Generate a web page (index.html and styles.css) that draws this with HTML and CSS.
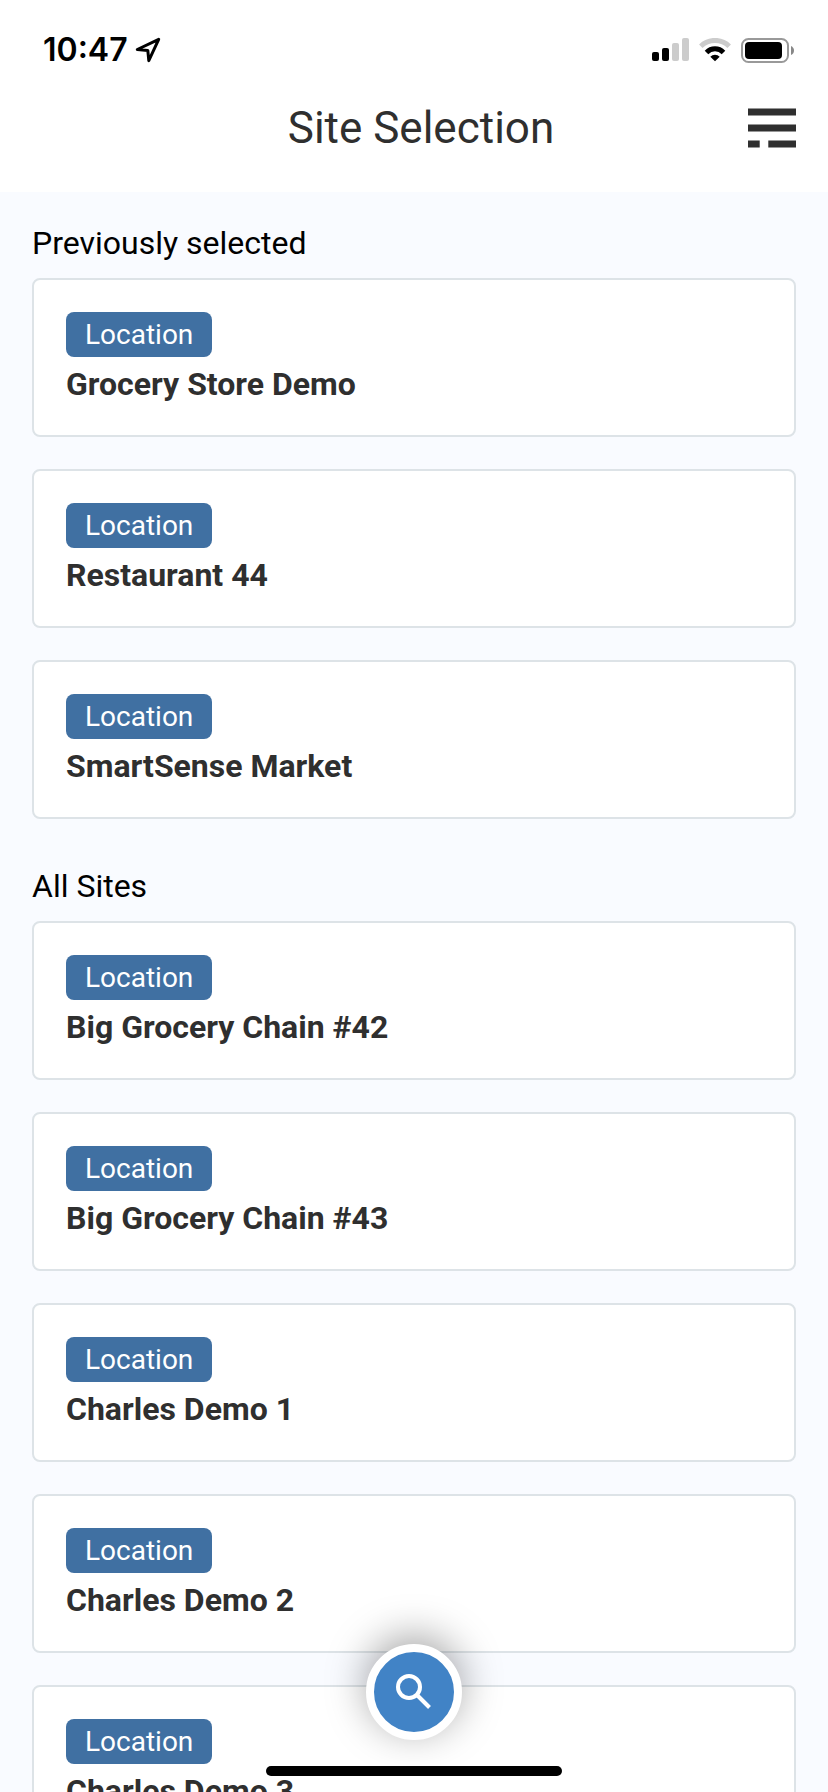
FILE: index.html
```html
<!DOCTYPE html>
<html lang="en">
<head>
<meta charset="utf-8">
<meta name="viewport" content="width=device-width, initial-scale=1">
<title>Site Selection</title>
<link rel="stylesheet" href="styles.css">
</head>
<body>
<div class="app">
  <div class="status">
    <div class="status-left">
      <time class="clock">10:47</time>
      <svg width="26" height="26" viewBox="0 0 26 26" fill="none" stroke="#000" stroke-width="3" stroke-linejoin="round" aria-hidden="true"><path d="M23.700 2.300 2.300 12.500 12.800 13.400 13.800 23.700Z"/></svg>
    </div>
    <div class="status-right">
      <svg width="37" height="24" viewBox="0 0 37 24" aria-hidden="true">
        <rect x="0" y="14" width="7" height="9" rx="2"/><rect x="10" y="10" width="7" height="13" rx="2"/>
        <g fill="#ccc"><rect x="20" y="5" width="7" height="18" rx="2"/><rect x="30" y="0" width="7" height="23" rx="2"/></g>
      </svg>
      <svg width="32" height="24" viewBox="0 0 32 24" fill="none" stroke-width="5" aria-hidden="true">
        <path stroke="#ccc" d="M1.8 8.2A20.3 20.3 0 0 1 30.2 8.2"/>
        <path stroke="#000" d="M7.5 14.4A12 12 0 0 1 24.5 14.4"/>
        <path fill="#000" d="M11.3 18.7A6.6 6.6 0 0 1 20.7 18.7L16 23.3Z"/>
      </svg>
      <svg width="53" height="25" viewBox="0 0 53 25" aria-hidden="true">
        <rect x="1" y="1" width="46" height="23" rx="6.5" fill="none" stroke="#999" stroke-width="2"/>
        <rect x="4" y="4" width="37" height="17" rx="4"/>
        <path fill="#888" d="M50 8Q53 9.500 53 12.500T50 17Z"/>
      </svg>
    </div>
  </div>
  <header class="header">
    <h1 class="title">Site Selection</h1>
    <button class="menu" aria-label="Menu">
      <svg width="48" height="40" viewBox="0 0 48 40" fill="#2f2f2f" aria-hidden="true"><path d="M0 .4H48V7.600H0ZM0 16.400H48V23.600H0ZM0 32.400H11.700V39.600H0ZM20.300 32.400H48V39.600H20.300Z"/></svg>
    </button>
  </header>
  <main class="content">
    <h2 class="label">Previously selected</h2>
    <ul class="sites">
      <li><button class="card"><span class="badge">Location</span><span class="name">Grocery Store Demo</span></button></li>
      <li><button class="card"><span class="badge">Location</span><span class="name">Restaurant 44</span></button></li>
      <li><button class="card"><span class="badge">Location</span><span class="name">SmartSense Market</span></button></li>
    </ul>
    <h2 class="label">All Sites</h2>
    <ul class="sites">
      <li><button class="card"><span class="badge">Location</span><span class="name">Big Grocery Chain #42</span></button></li>
      <li><button class="card"><span class="badge">Location</span><span class="name">Big Grocery Chain #43</span></button></li>
      <li><button class="card"><span class="badge">Location</span><span class="name">Charles Demo 1</span></button></li>
      <li><button class="card"><span class="badge">Location</span><span class="name">Charles Demo 2</span></button></li>
      <li><button class="card"><span class="badge">Location</span><span class="name">Charles Demo 3</span></button></li>
    </ul>
  </main>
  <div class="overlay">
    <button class="search" aria-label="Search">
      <svg width="36" height="36" viewBox="0 0 36 36" fill="none" stroke="#fff" stroke-width="4" aria-hidden="true"><circle cx="13" cy="13" r="11"/><path d="M21.500 21.500 33.500 33.500"/></svg>
    </button>
    <div class="home-bar"></div>
  </div>
</div>
</body>
</html>
```
FILE: styles.css
```css
* {
  box-sizing: border-box;
}

body {
  margin: 0;
  background: #f9fbff;
  font-family: Roboto, sans-serif;
  color: #000;
}

button {
  border: 0;
  padding: 0;
  background: none;
  font: inherit;
  color: inherit;
  cursor: pointer;
}

svg {
  display: block;
}

.app {
  display: flex;
  flex-direction: column;
  height: 100vh;
}

.status {
  display: flex;
  flex: none;
  align-items: center;
  justify-content: space-between;
  height: 64px;
  padding: 36px 34px 0 43px;
  background: #fff;
}

.status-left,
.status-right {
  display: flex;
  align-items: center;
  gap: 7px;
}

.status-right {
  gap: 10px;
}

.clock {
  font: 600 32px/28px Inter, sans-serif;
}

.header {
  display: grid;
  grid-template-columns: 62px 1fr 48px;
  align-items: center;
  height: 128px;
  flex: none;
  padding: 0 32px;
  background: #fff;
}

.title {
  grid-column: 2;
  margin: 0;
  font-size: 44px;
  line-height: 52px;
  font-weight: 400;
  text-align: center;
  color: #2f2f2f;
}

.content {
  flex: 1;
  min-height: 0;
  overflow-y: auto;
  scrollbar-width: none;
  padding: 16px 32px;
}

.label {
  margin: 16px 0;
  font-size: 32px;
  line-height: 38px;
  font-weight: 400;
}

.sites {
  display: flex;
  flex-direction: column;
  gap: 32px;
  margin: 0 0 48px;
  padding: 0;
  list-style: none;
}

.card {
  display: flex;
  flex-direction: column;
  align-items: flex-start;
  gap: 8px;
  width: 100%;
  padding: 32px;
  border: 2px solid #dde3e7;
  border-radius: 8px;
  background: #fff;
  text-align: left;
}

.badge {
  padding: 0 19px;
  border-radius: 8px;
  background: #4070a2;
  color: #fff;
  font-size: 28px;
  line-height: 45px;
}

.name {
  font-size: 32px;
  line-height: 38px;
  font-weight: 700;
  color: #2f2f2f;
}

.overlay {
  position: fixed;
  inset: auto 0 16px;
  display: flex;
  flex-direction: column;
  align-items: center;
  gap: 26px;
  pointer-events: none;
}

.search {
  display: grid;
  place-items: center;
  width: 96px;
  height: 96px;
  border: 8px solid #fff;
  border-radius: 50%;
  background: #4183c6;
  box-shadow: 0 -8px 40px rgba(0, 0, 0, 0.36);
  pointer-events: auto;
}

.home-bar {
  width: 296px;
  height: 10px;
  border-radius: 5px;
  background: #000;
}
```
